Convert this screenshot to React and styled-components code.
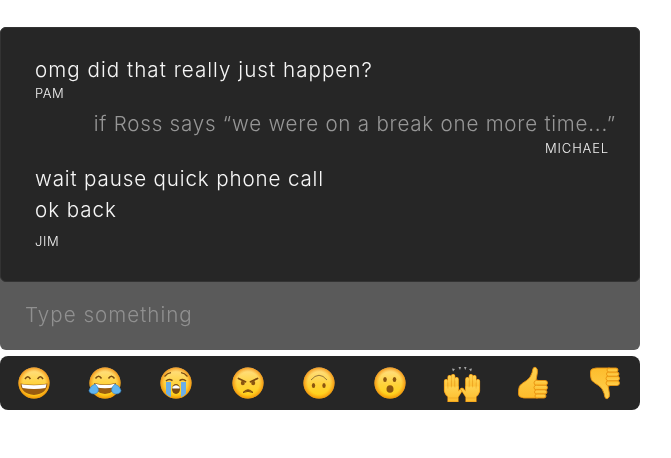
import React from "react";
import styled, { createGlobalStyle } from "styled-components";

const Global = createGlobalStyle`
  html, body { margin: 0; background: #fff; }
  body { font-family: Inter, "Open Sans", sans-serif; }
`;

const Page = styled.div`
  width: 640px;
  padding-top: 27px;
  display: flex;
  flex-direction: column;
  gap: 6px;
`;

const Composer = styled.div`
  background: #5a5a5a;
  border-radius: 6px;
`;

const Log = styled.div`
  background: #262626;
  border: 1px solid #333;
  border-radius: 6px;
  height: 255px;
  box-sizing: border-box;
  padding: 26px 23px 0 34px;
  display: flex;
  flex-direction: column;
`;

const Group = styled.div`
  display: flex;
  flex-direction: column;
  margin-bottom: 7px;
  will-change: transform;
  align-items: ${(p) => (p.$mine ? "flex-end" : "flex-start")};
  color: ${(p) => (p.$mine ? "#969696" : "#f6f6f6")};
`;

const Line = styled.div`
  font-size: 20.6px;
  font-weight: 350;
  line-height: 31px;
  letter-spacing: ${(p) => p.$track}px;
  white-space: nowrap;
`;

const Name = styled.div`
  font-size: 13px;
  font-weight: 350;
  line-height: 16px;
  letter-spacing: ${(p) => (p.$mine ? "0.85px" : "0.55px")};
  color: #f0f0f0;
  margin-top: ${(p) => (p.$spaced ? "8px" : p.$mine ? "1px" : "0")};
  margin-right: ${(p) => (p.$mine ? "7px" : "0")};
`;

const Input = styled.input`
  display: block;
  width: 100%;
  box-sizing: border-box;
  height: 68px;
  border: 0;
  outline: 0;
  background: transparent;
  will-change: transform;
  padding: 0 25px 4px;
  font-family: inherit;
  font-size: 20.6px;
  font-weight: 350;
  letter-spacing: 1px;
  color: #fff;
  &::placeholder { color: #909090; opacity: 1; }
`;

const EmojiBar = styled.div`
  height: 54px;
  background: #262626;
  border-radius: 8px;
  display: flex;
  align-items: center;
  gap: 39.4px;
  padding-left: 17.5px;
`;

const EmojiButton = styled.div`
  width: 32px;
  height: 32px;
  flex: none;
  svg { display: block; overflow: visible; }
`;

const Icon = ({ children }) => (
  <EmojiButton>
    <svg width="32" height="32" viewBox="0 0 32 32">{children}</svg>
  </EmojiButton>
);

const Defs = () => (
  <svg width="0" height="0" style={{ position: "absolute" }}>
    <defs>
      <linearGradient id="face" x1="0" y1="0" x2="0" y2="1">
        <stop offset="0" stopColor="#ffe08a" />
        <stop offset="0.55" stopColor="#ffd23a" />
        <stop offset="1" stopColor="#ffd210" />
      </linearGradient>
      <radialGradient id="rim" cx="0.5" cy="0.5" r="0.5">
        <stop offset="0.72" stopColor="#f79a10" stopOpacity="0" />
        <stop offset="1" stopColor="#f08a0a" stopOpacity="0.85" />
      </radialGradient>
      <linearGradient id="hand" x1="0" y1="0" x2="0" y2="1">
        <stop offset="0" stopColor="#ffd250" />
        <stop offset="1" stopColor="#fdbc2c" />
      </linearGradient>
    </defs>
  </svg>
);

const Face = () => (
  <>
    <circle cx="16" cy="16" r="15.5" fill="url(#face)" />
    <circle cx="16" cy="16" r="15.5" fill="url(#rim)" />
  </>
);

const Grin = () => (
  <Icon>
    <Face />
    <path d="M7 12q2.800-4.500 5.400 0M19.600 12q2.800-4.500 5.400 0" fill="none" stroke="#7a4a10" strokeWidth="1.500" />
    <path d="M2.500 16.500q13.500 2.500 27 0q-.5 10-13.500 11.500q-13-1.500-13.500-11.500z" fill="#9a5c10" />
    <path d="M3.500 17.200q12.500 2.300 25 0l-1 3.800q-11.500 2-23 0z" fill="#fff" />
  </Icon>
);

const Joy = () => (
  <Icon>
    <Face />
    <path d="M6.500 11.500q3.200-4.500 6 0M19.500 11.500q2.800-4.500 6 0" fill="none" stroke="#7a4a10" strokeWidth="1.500" />
    <path d="M5 16q11 2.800 22 0q-.5 10.500-11 11q-10.500-.5-11-11z" fill="#9a5c10" />
    <path d="M6 16.800q10 2.400 20 0l-.7 3.400q-9.300 2-18.600 0z" fill="#fff" />
    <path d="M6 17q3 2.500 3.400 5.500q.2 3.800-4.200 4.500q-4.800-.2-5.200-3.500q1-4.500 6-6.500z" fill="#62b5ee" stroke="#2f7fc4" strokeWidth=".6" />
    <path d="M26 17q-3 2.500-3.400 5.500q-.2 3.800 4.200 4.500q4.800-.2 5.200-3.500q-1-4.500-6-6.500z" fill="#62b5ee" stroke="#2f7fc4" strokeWidth=".6" />
  </Icon>
);

const Sob = () => (
  <Icon>
    <Face />
    <path d="M4.500 9.500q3-3.500 6.500-3.800M27.500 9.500q-3-3.500-6.500-3.800" fill="none" stroke="#7a4a10" strokeWidth="1.200" />
    <path d="M6 14q3-3 6.500-.3M19.500 13.700q3.500-2.700 6.500.3" fill="none" stroke="#7a4a10" strokeWidth="1.500" />
    <path d="M6 15h5v15q-2.800-1-5-3.500z" fill="#6aaee6" />
    <path d="M21 15h5v11.500q-2.200 2.500-5 3.500z" fill="#6aaee6" />
    <ellipse cx="16" cy="22" rx="4" ry="5" fill="#7a4a10" />
    <path d="M12.400 20q3.600-3.300 7.200 0v1.500h-7.200z" fill="#fff" />
  </Icon>
);

const Angry = () => (
  <Icon>
    <Face />
    <path d="M6.500 11.500l7 3.200M25.500 11.500l-7 3.200" stroke="#7a4a10" strokeWidth="1.800" strokeLinecap="round" />
    <ellipse cx="10.800" cy="16" rx="2" ry="2.300" fill="#8a5510" />
    <ellipse cx="21.200" cy="16" rx="2" ry="2.300" fill="#8a5510" />
    <path d="M11 25.500q5-5.500 10 0q-5-2.300-10 0z" fill="#7a4a10" stroke="#7a4a10" strokeWidth="1" strokeLinejoin="round" />
  </Icon>
);

const UpsideDown = () => (
  <Icon>
    <Face />
    <path d="M8 13q8-9.500 16 0" fill="none" stroke="#96753a" strokeWidth="1" />
    <ellipse cx="10.500" cy="18.500" rx="1.700" ry="2.500" fill="#8a5510" />
    <ellipse cx="21" cy="18.500" rx="1.700" ry="2.500" fill="#8a5510" />
  </Icon>
);

const Open = () => (
  <Icon>
    <Face />
    <ellipse cx="11" cy="12.500" rx="1.800" ry="2.500" fill="#8a5510" />
    <ellipse cx="20.500" cy="12.500" rx="1.800" ry="2.500" fill="#8a5510" />
    <ellipse cx="16" cy="22" rx="3.500" ry="3.800" fill="#8a5510" />
  </Icon>
);

// drawn twice: once with the orange outline, once flat on top so inner edges vanish
const HandShapes = ({ stroke }) => {
  const paint = stroke ? { stroke: "#e9920f", strokeWidth: 1.2 } : {};
  return (
    <g fill="url(#hand)" {...paint}>
      <rect x="0.500" y="5" width="3.200" height="13" rx="1.600" />
      <rect x="4" y="1" width="3.200" height="15" rx="1.600" />
      <rect x="7.500" y="0" width="3.200" height="15" rx="1.600" />
      <rect x="11" y="3" width="3.200" height="13" rx="1.600" />
      <path d="M1 12h13.200v5l3-2.800q1.300-.9 2 .2L14 22.500v4.500H4v-5q-3-2-3-5z" />
    </g>
  );
};

const Hand = () => (
  <>
    <HandShapes stroke />
    <HandShapes />
    <path d="M3.900 8v6M7.400 6v7M10.900 6v7" stroke="#e9a020" strokeWidth=".5" />
    <path d="M4.300 23.500h9.500" stroke="#e9a020" strokeWidth=".6" />
  </>
);

const Raised = () => (
  <svg width="36" height="36" viewBox="0 0 36 36" style={{ marginLeft: "-2px", marginTop: "-1px" }}>
    <path d="M8 2.500l3 .5-2 2.500zM14.500 1h2.500l-1 3zM20 1h2.500l-1.200 3zM28 2.500l-1 3-2-2.500z" fill="#a8a8a8" />
    <g transform="translate(0 8.500)"><Hand /></g>
    <g transform="translate(36 8.500) scale(-1 1)"><Hand /></g>
  </svg>
);

const ThumbShape = () => (
  <>
    <path
      d="M0.600 23q0-4.500 3.500-6.500l4.500-3q4-2.500 5.500-8l.8-3.500q.5-2 2.300-1.700q2.700.7 2.200 5.200l-1.300 7.500h1.500v18H7q-2 0-3-.6H3.500q-3-.4-3-3.400z"
      fill="url(#hand)"
      stroke="#e9920f"
      strokeWidth=".9"
    />
    <g fill="url(#hand)" stroke="#e9920f" strokeWidth=".9">
      <rect x="16" y="13.500" width="13.500" height="4.800" rx="2.400" />
      <rect x="16" y="18.300" width="13.500" height="4.600" rx="2.300" />
      <rect x="16.500" y="22.900" width="12.500" height="4.200" rx="2.100" />
      <rect x="17" y="27.100" width="11" height="3.900" rx="1.950" />
    </g>
  </>
);

const Up = () => (
  <Icon>
    <g transform="translate(1 0)"><ThumbShape /></g>
  </Icon>
);

const Down = () => (
  <Icon>
    <g transform="translate(1 32) scale(1 -1)"><ThumbShape /></g>
  </Icon>
);

export default function App() {
  return (
    <>
      <Global />
      <Defs />
      <Page>
        <Composer>
          <Log>
            <Group>
              <Line $track={1.03}>omg did that really just happen?</Line>
              <Name>PAM</Name>
            </Group>
            <Group $mine>
              <Line $track={0.76}>if Ross says “we were on a break one more time...”</Line>
              <Name $mine>MICHAEL</Name>
            </Group>
            <Group>
              <Line $track={0.85}>wait pause quick phone call</Line>
              <Line $track={0.95}>ok back</Line>
              <Name $spaced>JIM</Name>
            </Group>
          </Log>
          <Input placeholder="Type something" />
        </Composer>
        <EmojiBar>
          <Grin />
          <Joy />
          <Sob />
          <Angry />
          <UpsideDown />
          <Open />
          <EmojiButton><Raised /></EmojiButton>
          <Up />
          <Down />
        </EmojiBar>
      </Page>
    </>
  );
}
